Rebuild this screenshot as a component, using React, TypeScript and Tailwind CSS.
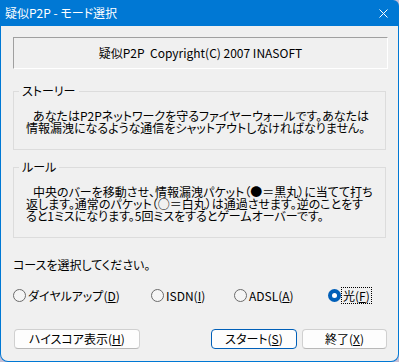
import React from 'react';

const font = "font-['Noto_Sans_CJK_JP',sans-serif] [font-feature-settings:'palt']";

interface RadioProps {
  pre: string;
  accel: string;
  post: string;
  checked?: boolean;
  focused?: boolean;
  width: string;
}

const Radio: React.FC<RadioProps> = ({ pre, accel, post, checked, focused, width }) => (
  <div className={`flex items-center gap-[2px] ${width}`}>
    {checked ? (
      <span className="flex h-[13px] w-[13px] items-center justify-center rounded-full bg-[#005fb8]">
        <span className="h-[5px] w-[5px] rounded-full bg-white" />
      </span>
    ) : (
      <span className="h-[13px] w-[13px] rounded-full border border-[#6b6b6b] bg-[#f5f5f5]" />
    )}
    <span
      className={`whitespace-nowrap leading-[13px] ${
        focused ? 'outline outline-1 outline-dotted outline-black outline-offset-[1px]' : ''
      }`}
    >
      {pre}
      <span className="underline underline-offset-[1px]">{accel}</span>
      {post}
    </span>
  </div>
);

interface ButtonProps {
  pre: string;
  accel: string;
  post: string;
  primary?: boolean;
  width: string;
}

const Button: React.FC<ButtonProps> = ({ pre, accel, post, primary, width }) => (
  <button
    className={`flex h-[20px] items-center justify-center rounded-[4px] border bg-[#fdfdfd] text-[12px] leading-none ${width} ${
      primary ? 'border-[#005fb8]' : 'border-[#d0d0d0] border-b-[#b8b8b8]'
    }`}
  >
    {pre}
    <span className="underline underline-offset-[1px]">{accel}</span>
    {post}
  </button>
);

export default function App() {
  return (
    <div className={`h-[362px] w-[399px] bg-[#c6bfd6] text-[12px] text-black ${font}`}>
      <div className="flex h-full flex-col rounded-b-[8px] rounded-tr-[6px] bg-[#0078d4] px-[1px] pb-[1px]">
        {/* title bar */}
        <div className="flex h-[26px] shrink-0 items-center justify-between pl-[4px] pr-[10px] text-white">
          <span className="leading-none">疑似P2P - モード選択</span>
          <svg width="9" height="9" viewBox="0 0 9 9" className="mt-[1px]">
            <path d="M0.5 0.5 L8.5 8.5 M8.5 0.5 L0.5 8.5" stroke="white" strokeWidth="1" />
          </svg>
        </div>

        {/* body */}
        <div className="flex flex-1 flex-col rounded-b-[7px] bg-[#f0f0f0] pl-[12px] pr-[11px]">
          <div className="mt-[11px] flex h-[32px] w-[375px] items-center justify-center border border-b-white border-l-[#a0a0a0] border-r-white border-t-[#a0a0a0] whitespace-pre">
            疑似P2P  Copyright(C) 2007 INASOFT
          </div>

          <fieldset className="mt-[16px] w-[373px] border border-[#dcdcdc] p-0">
            <legend className="ml-[5px] px-[3px] leading-[12px]">ストーリー</legend>
            <div className="pl-[12px] pt-[13px] pb-[15px] leading-[12px] whitespace-nowrap">
              <div className="pl-[7px]">あなたはP2Pネットワークを守るファイヤーウォールです。あなたは</div>
              <div>情報漏洩になるような通信をシャットアウトしなければなりません。</div>
            </div>
          </fieldset>

          <fieldset className="mt-[11px] w-[373px] border border-[#dcdcdc] p-0">
            <legend className="ml-[5px] px-[3px] leading-[12px]">ルール</legend>
            <div className="pl-[12px] pt-[13px] pb-[15px] leading-[12px] whitespace-nowrap">
              <div className="pl-[7px]">中央のバーを移動させ、情報漏洩パケット（●＝黒丸）に当てて打ち</div>
              <div>返します。通常のパケット（○＝白丸）は通過させます。逆のことをす</div>
              <div>ると1ミスになります。5回ミスをするとゲームオーバーです。</div>
            </div>
          </fieldset>

          <div className="mt-[21px] leading-[12px]">コースを選択してください。</div>

          <div className="mt-[18px] flex items-center">
            <Radio pre="ダイヤルアップ(" accel="D" post=")" width="w-[138px]" />
            <Radio pre="ISDN(" accel="I" post=")" width="w-[83px]" />
            <Radio pre="ADSL(" accel="A" post=")" width="w-[94px]" />
            <Radio pre="光(" accel="F" post=")" checked focused width="w-[50px]" />
          </div>

          <div className="mt-[27px] flex items-center justify-between">
            <div className="ml-[1px]">
              <Button pre="ハイスコア表示(" accel="H" post=")" width="w-[126px]" />
            </div>
            <div className="flex gap-[5px]">
              <Button pre="スタート(" accel="S" post=")" primary width="w-[86px]" />
              <Button pre="終了(" accel="X" post=")" width="w-[85px]" />
            </div>
          </div>
        </div>
      </div>
    </div>
  );
}
